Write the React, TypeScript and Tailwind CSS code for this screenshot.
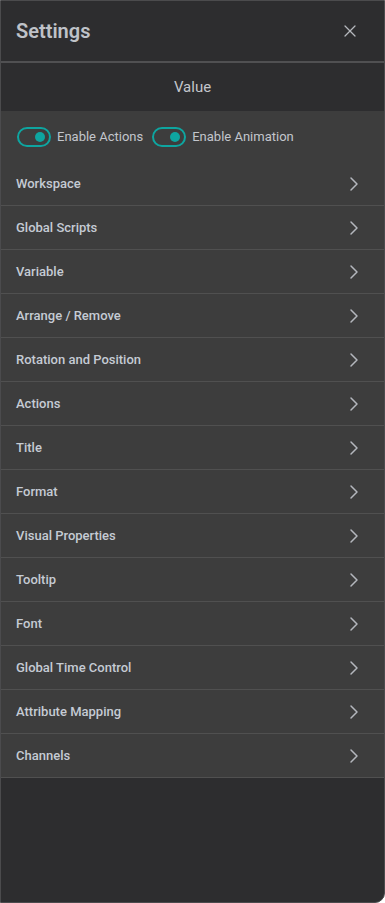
import React from 'react';
import { ChevronRight, X } from 'lucide-react';

const sections: string[] = [
  'Workspace',
  'Global Scripts',
  'Variable',
  'Arrange / Remove',
  'Rotation and Position',
  'Actions',
  'Title',
  'Format',
  'Visual Properties',
  'Tooltip',
  'Font',
  'Global Time Control',
  'Attribute Mapping',
  'Channels',
];

const Toggle: React.FC<{ label: string }> = ({ label }) => (
  <label className="flex items-center gap-[6px]">
    <span className="relative flex h-[20px] w-[34px] items-center rounded-full border-2 border-[#0ea5a0]">
      <span className="absolute right-[4px] h-[10px] w-[10px] rounded-full bg-[#0ea5a0]" />
    </span>
    <span className="text-[13px] text-[#c3c6cc]">{label}</span>
  </label>
);

export default function App() {
  return (
    <div className="h-[903px] w-[385px] bg-white font-['Roboto',sans-serif]">
      <div className="flex h-full flex-col overflow-hidden rounded-br-[10px] border border-[#4b4b4d] bg-[#2d2d2f]">
        <div className="flex h-[62px] shrink-0 items-center justify-between border-b-2 border-[#505052] pl-[15px] pr-[24px]">
          <h1 className="text-[20px] font-semibold text-[#bfc2c8]">Settings</h1>
          <X className="h-[20px] w-[20px] text-[#b5b8be]" strokeWidth={1.5} />
        </div>
        <div className="flex h-[48px] shrink-0 items-center justify-center text-[15px] text-[#c3c6cc]">Value</div>
        <div className="bg-[#3d3d3d]">
          <div className="flex h-[51px] items-center gap-[9px] px-[16px]">
            <Toggle label="Enable Actions" />
            <Toggle label="Enable Animation" />
          </div>
          {sections.map(name => (
            <div
              key={name}
              className="flex h-[44px] items-center justify-between border-b border-[#505050] pl-[15px] pr-[18px]"
            >
              <span className="text-[13px] font-medium text-[#c5cbd4]">{name}</span>
              <ChevronRight className="h-[24px] w-[24px] text-[#b4b7bd]" strokeWidth={1.5} />
            </div>
          ))}
        </div>
      </div>
    </div>
  );
}
